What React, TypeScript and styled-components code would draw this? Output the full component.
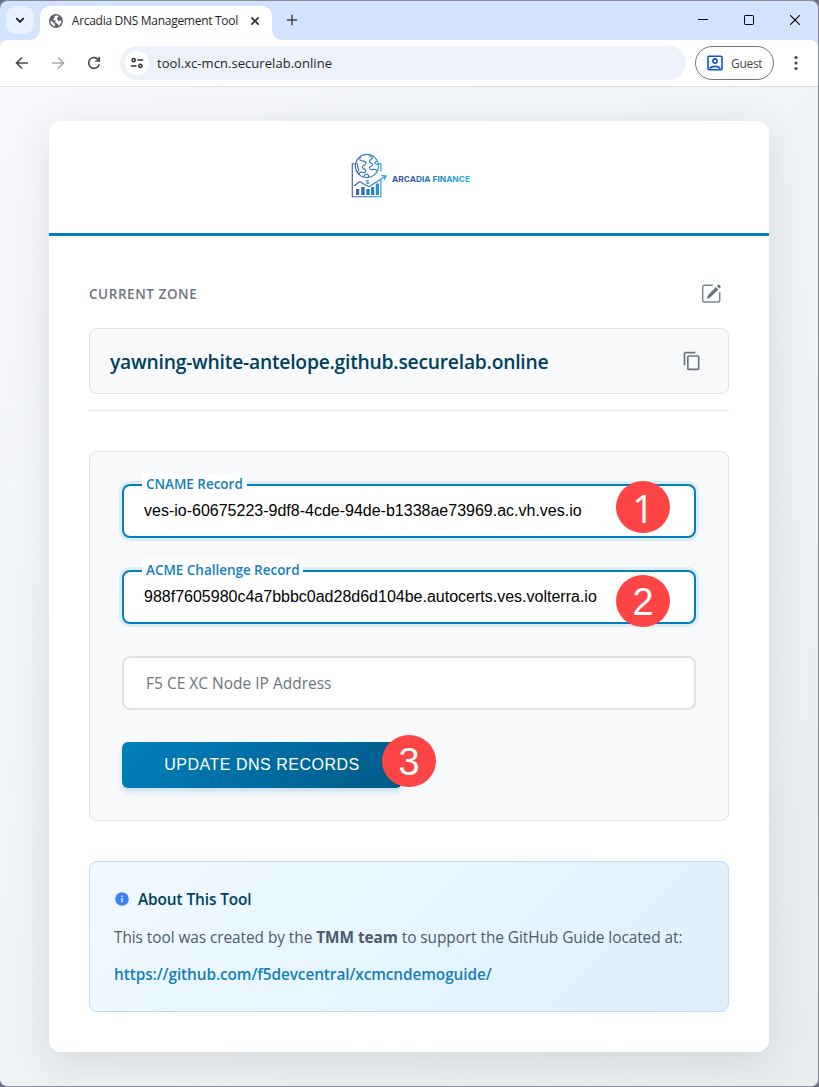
import React from 'react';
import styled, { createGlobalStyle, css } from 'styled-components';
import { MdContentCopy } from 'react-icons/md';

const GlobalStyle = createGlobalStyle`
  *, *::before, *::after { box-sizing: border-box; }
  html, body { margin: 0; padding: 0; background: #6f6e85; }
  body { font-family: 'Open Sans', 'Noto Sans', sans-serif; overflow: hidden; }
  button, input { font: inherit; margin: 0; }
`;

const BrowserWindow = styled.div`
  width: 819px;
  height: 1087px;
  display: flex;
  flex-direction: column;
  border: 1px solid #8b8d98;
  border-left: 0;
  border-radius: 8px;
  overflow: hidden;
  background: #d3e3fd;
`;

const TabStrip = styled.header`
  display: flex;
  height: 39px;
  flex: none;
  align-items: flex-end;
`;

const TabSearch = styled.button`
  width: 28px;
  height: 28px;
  margin: 0 6px 6px;
  border: 0;
  border-radius: 10px;
  padding: 0;
  background: #e9f0fe;
  display: grid;
  place-items: center;
`;

const Tab = styled.div`
  position: relative;
  display: flex;
  align-items: center;
  width: 232px;
  height: 34px;
  padding: 0 9px 5px;
  border-radius: 10px 10px 0 0;
  background: #fff;
  &::before, &::after {
    content: '';
    position: absolute;
    bottom: 0;
    width: 10px;
    height: 10px;
  }
  &::before { left: -10px; background: radial-gradient(circle at 0 0, transparent 9.5px, #fff 10px); }
  &::after { right: -10px; background: radial-gradient(circle at 100% 0, transparent 9.5px, #fff 10px); }
`;

const TabTitle = styled.span`
  width: 169px;
  margin-left: 9px;
  font-size: 12px;
  letter-spacing: -0.29px;
  color: #1f1f1f;
  white-space: nowrap;
`;

const IconButton = styled.button<{ $w: number; $h?: number }>`
  border: 0;
  padding: 0;
  background: transparent;
  width: ${p => p.$w}px;
  height: ${p => p.$h ?? p.$w}px;
  display: grid;
  place-items: center;
  flex: none;
`;

const CloseTab = styled(IconButton)`
  margin-left: 8px;
`;

const NewTab = styled(IconButton)`
  margin: 0 0 10px 10px;
`;

const WindowControls = styled.div`
  display: flex;
  margin-left: auto;
  height: 39px;
`;

const Toolbar = styled.div`
  display: flex;
  align-items: center;
  height: 47px;
  flex: none;
  background: #fff;
  border-bottom: 1px solid #dfe1e3;
  border-radius: 8px 8px 0 0;
  padding: 0 4px;
`;

const AddressBar = styled.div`
  display: flex;
  align-items: center;
  flex: none;
  width: 566px;
  height: 34px;
  margin-left: 8px;
  padding-left: 5px;
  border-radius: 17px;
  background: #ecf1fa;
`;

const SiteInfo = styled.span`
  width: 24px;
  height: 24px;
  border-radius: 50%;
  background: #fff;
  display: grid;
  place-items: center;
`;

const Address = styled.span`
  margin-left: 8px;
  font-size: 13px;
  letter-spacing: 0.05px;
  color: #1f1f1f;
`;

const Profile = styled.button`
  display: flex;
  align-items: center;
  flex: none;
  width: 79px;
  height: 34px;
  margin-left: 9px;
  padding: 0 0 0 11px;
  border: 1px solid #747775;
  border-radius: 17px;
  background: #fff;
  color: #474747;
  font-size: 12px;
  letter-spacing: -0.3px;
  gap: 8px;
`;

const MenuButton = styled(IconButton)`
  margin-left: 4px;
`;

const Page = styled.main`
  flex: 1;
  padding: 34px 49px 34px;
  background: linear-gradient(135deg, #f6f8fc 0%, #e9edef 100%);
`;

const Card = styled.section`
  width: 720px;
  height: 931px;
  border-radius: 12px;
  background: #fff;
  box-shadow: 0 10px 40px rgba(0, 0, 0, 0.1);
`;

const Brand = styled.header`
  height: 115px;
  display: flex;
  justify-content: center;
  padding: 30px 0 0 4px;
  border-bottom: 3px solid #0080bd;
`;

const Body = styled.div`
  padding: 40px;
`;

const ZoneHeader = styled.div`
  display: flex;
  align-items: center;
  justify-content: space-between;
  height: 35px;
  padding-right: 7px;
`;

const ZoneTitle = styled.h2`
  margin: 0;
  font-size: 13.5px;
  font-weight: 600;
  letter-spacing: 0.56px;
  color: #6c757d;
`;

const ZoneBox = styled.div`
  display: flex;
  align-items: center;
  justify-content: space-between;
  height: 66px;
  margin-top: 17px;
  padding: 0 26px 0 20px;
  border: 1px solid #dee2e6;
  border-radius: 8px;
  background: #f8f9fb;
`;

const ZoneName = styled.span`
  font-size: 19.3px;
  font-weight: 600;
  letter-spacing: -0.235px;
  color: #003f5e;
`;

const Divider = styled.hr`
  margin: 16px 0 40px;
  border: 0;
  height: 1px;
  background: #e5e8eb;
`;

const Form = styled.form`
  display: flex;
  flex-direction: column;
  align-items: flex-start;
  height: 370px;
  padding: 32px;
  border: 1px solid #dee2e6;
  border-radius: 8px;
  background: #f8f9fb;
`;

const Field = styled.div`
  position: relative;
  width: 574px;
  height: 54px;
  margin-bottom: 32px;
  &:nth-child(3) { margin-top: 0.5px; }
`;

const Input = styled.input<{ $active?: boolean }>`
  display: block;
  width: 100%;
  height: 100%;
  padding: 0 20px;
  border: 2px solid #dee2e6;
  border-radius: 8px;
  outline: 0;
  background: #fff;
  color: #000;
  font-family: 'Liberation Sans', Arial, sans-serif;
  font-size: 16px;
  &::placeholder {
    color: #6c757d;
    opacity: 1;
    font-family: 'Open Sans', sans-serif;
    font-size: 15.5px;
  }
  ${p => p.$active ? css`
    border-color: #0080bd;
    box-shadow: 0 0 0 3px rgba(0, 128, 189, 0.1);
  ` : css`padding: 2px 22px 0;`}
`;

const FieldLabel = styled.label<{ $w: number }>`
  position: absolute;
  top: -11px;
  left: 20px;
  width: ${p => p.$w}px;
  padding: 0 4px;
  background: #fff;
  color: #147fbb;
  font-size: 13.5px;
  font-weight: 600;
  line-height: 22px;
  letter-spacing: -0.03px;
  white-space: nowrap;
`;

const Marker = styled.span<{ $x: number; $y: number; $plainOne?: boolean }>`
  position: absolute;
  left: ${p => p.$x}px;
  top: ${p => p.$y}px;
  width: 54px;
  height: 52px;
  border-radius: 50%;
  background: #fe4444;
  color: #fff;
  font: 38px/54px ${p => p.$plainOne ? "'Open Sans'" : "'Liberation Sans', Arial"}, sans-serif;
  text-align: center;
`;

const SubmitRow = styled.div`
  position: relative;
`;

const Submit = styled.button`
  width: 280px;
  height: 46px;
  border: 0;
  border-radius: 6px;
  padding: 0;
  background: linear-gradient(135deg, #0080bd, #005a87);
  box-shadow: 0 4px 6px rgba(0, 128, 189, 0.2);
  color: #fff;
  font-family: 'Liberation Sans', Arial, sans-serif;
  font-size: 16px;
  letter-spacing: 0.5px;
`;

const Info = styled.section`
  height: 151px;
  margin-top: 40px;
  padding: 23px 24px;
  border: 1px solid #bedbfb;
  border-radius: 8px;
  background: linear-gradient(135deg, #f0f9ff, #e2f3fe 75%, #deeffe);
`;

const InfoTitle = styled.h3`
  display: flex;
  align-items: center;
  gap: 9px;
  height: 28px;
  margin: 0;
  color: #003f5e;
  font-size: 15.4px;
  font-weight: 600;
  letter-spacing: -0.1px;
`;

const InfoText = styled.p`
  margin: 12px 0 0;
  color: #4b5b6c;
  font-size: 15.4px;
  letter-spacing: -0.06px;
  line-height: 26px;
  white-space: nowrap;
`;

const InfoLink = styled.a`
  display: block;
  width: fit-content;
  margin-top: 11px;
  color: #147fbb;
  font-size: 15.4px;
  font-weight: 600;
  letter-spacing: -0.1px;
  line-height: 26px;
  text-decoration: none;
`;

const Logo = () => (
  <svg width="122" height="48" viewBox="350 150.500 122 48" fill="none" role="img" aria-label="Arcadia Finance">
    <defs>
      <linearGradient id="mark" x1="351" x2="387" y1="0" y2="0" gradientUnits="userSpaceOnUse">
        <stop stopColor="#4358a2" /><stop offset=".55" stopColor="#2883c0" /><stop offset="1" stopColor="#26aade" />
      </linearGradient>
      <linearGradient id="word" x1="392" x2="470" y1="0" y2="0" gradientUnits="userSpaceOnUse">
        <stop stopColor="#3c4b9e" /><stop offset=".5" stopColor="#2878bd" /><stop offset="1" stopColor="#27b4e8" />
      </linearGradient>
    </defs>
    <g stroke="url(#mark)" strokeWidth="1.150">
      <path d="M354.500 163.200H352.300V196.200H380.900V179M380.900 171V163.200H378.700" />
      <circle cx="366.900" cy="165.500" r="11.600" />
      <path d="M360.500 156.500c-1.400 1.700-.7 3.300 1.100 3.800 2.300.6 4.300.3 4.400 2.300.1 2.300-3.700 1.800-3.700 4 0 2.100 3.500 1.400 3.500 3.700 0 1.800-2 2-3.700 1.500-2-.6-2.900.6-3.500 2.200M355.600 163c1.800-.2 2.400 1.300 2 2.800-.3 1.700 1.200 2.300 1 3.900-.1 1.100-1 1.500-1.400 2.300" />
      <path d="M369.500 154.500c.7 1.900 2.900 1.300 2.800 3.100-.1 1.600-2.800 1.200-2.900 3.200-.1 2.100 3.200 1.300 3.200 3.200 0 1.700-3 1.400-3.100 3.400-.1 1.900 2.500 2 4 1.500 1.600-.5 2.500.3 3.400 1.200M377.600 161c-1.600-.7-2.900 0-2.700 1.300.2 1.200 1.900 1.200 3.400 1.800M364 176.500c.1-2 1.300-3.300 3.200-2.900 1.500.3 1.500 1.500 1.400 3.200" />
      <path d="M354.200 185.500L359.700 181L364 183.800M369 186.300L385.600 175.500M381.200 175.100L386.100 175.300L384.200 179.500M364 183.800L369 186.300" />
    </g>
    <text x="365.800" y="183.200" fill="#2883c0" fontFamily="Liberation Sans, sans-serif" fontSize="6" fontWeight="700">$</text>
    <path fill="url(#mark)" d="M356 188.500h3.200v6H356zM361.200 186.500h3.500v8h-3.500zM366.400 188.500h3.300v6h-3.300zM371 186.500h3.300v8H371zM375.800 183h3.200v11.500h-3.200z" />
    <text x="392" y="181.600" textLength="78" lengthAdjust="spacingAndGlyphs" fill="url(#word)" fontFamily="Inter, sans-serif" fontSize="7.800" fontWeight="700">ARCADIA FINANCE</text>
  </svg>
);

const Globe = () => (
  <svg width="14" height="14" viewBox="0 0 14 14">
    <circle cx="7" cy="7" r="7" fill="#5f6368" />
    <path fill="#fff" d="M7.500 1.500c1 .2 1.700.5 2.300.9L8.700 3.700c-.9-.2-.9.600-.6 1.200.3.600 1 .5 1 1.300 0 .7 1.100 1 1.700.6.600-.4 1.200 0 1.700-.2.200 2.300-1.400 4.800-3.400 5.500.2-.9.500-1.600-.2-2.100C8.100 9.300 6.500 9.400 6.400 8.300c-.1-.8.700-1.400.1-1.900-.7-.6-1.600.1-2.100-.7C3.800 4.500 5 4.700 5.500 4c.6-.8-.3-1.300.4-2zM1.500 6.500l3 2.100c.3 1 1.500.8 1.500 1.900v1.900C3.200 12 1.300 9.400 1.500 6.500z" />
  </svg>
);

const EditIcon = () => (
  <svg width="21" height="21" viewBox="0 0 21 21" fill="none">
    <path d="M11.800 2.300H3.200a1.500 1.500 0 0 0-1.500 1.500v13.700A1.500 1.500 0 0 0 3.200 19h14a1.500 1.500 0 0 0 1.500-1.500V9.300" stroke="#7c858d" strokeWidth="1.500" />
    <path fill="#69727a" d="M14.900 4.100l2.400 2.400-7.800 7.800-3.900 1.700 1.600-4.100zM15.900 3.100l1.300-1.300c.3-.3.700-.3 1 0l1.400 1.400c.3.300.3.700 0 1l-1.300 1.300z" />
  </svg>
);

const stroke = (d: string, color = '#474747', width = 1.6, size = 16) => (
  <svg width={size} height={size} viewBox="0 0 16 16" fill="none" stroke={color} strokeWidth={width}>
    <path d={d} />
  </svg>
);

const App = () => (
  <>
    <GlobalStyle />
    <BrowserWindow>
      <TabStrip>
        <TabSearch aria-label="Search tabs">{stroke('M4.300 6.200L8 9.900L11.700 6.200', '#1f1f1f', 1.9)}</TabSearch>
        <Tab>
          <Globe />
          <TabTitle>Arcadia DNS Management Tool</TabTitle>
          <CloseTab $w={16} aria-label="Close tab">{stroke('M4.300 4.300L11.700 11.700M11.700 4.300L4.300 11.700', '#333', 1.7)}</CloseTab>
        </Tab>
        <NewTab $w={20} aria-label="New tab">{stroke('M8 2.800V13.200M2.800 8H13.200', '#474747', 1.5)}</NewTab>
        <WindowControls>
          <IconButton $w={46} $h={38} aria-label="Minimize">
            <svg width="10" height="10"><path d="M0 4.500H10" stroke="#000" /></svg>
          </IconButton>
          <IconButton $w={46} $h={38} aria-label="Maximize">
            <svg width="10" height="10" fill="none"><rect x=".5" y=".5" width="9" height="9" rx=".7" stroke="#000" /></svg>
          </IconButton>
          <IconButton $w={46} $h={38} aria-label="Close">
            <svg width="10" height="10"><path d="M0 0L10 10M10 0L0 10" stroke="#000" strokeWidth="1.100" /></svg>
          </IconButton>
        </WindowControls>
      </TabStrip>
      <Toolbar>
        <IconButton $w={36} aria-label="Back">{stroke('M14 8H2.800M8 2.500L2.500 8L8 13.500')}</IconButton>
        <IconButton $w={36} aria-label="Forward">{stroke('M2 8H13.200M8 2.500L13.500 8L8 13.500', '#aaa')}</IconButton>
        <IconButton $w={36} aria-label="Reload">
          {stroke('M12.700 5.200A5.400 5.400 0 1 0 13.300 9.200M13.300 1.900V6H9.200', '#474747', 1.6)}
        </IconButton>
        <AddressBar>
          <SiteInfo>{stroke('M8.500 4.700H15M1 11.300H7.500M4.200 2.800A1.900 1.900 0 1 0 4.210 2.800M11.800 9.400A1.900 1.900 0 1 0 11.810 9.400', '#333', 1.7, 14)}</SiteInfo>
          <Address>tool.xc-mcn.securelab.online</Address>
        </AddressBar>
        <Profile>
          <svg width="16" height="16" viewBox="0 0 16 16" fill="none" stroke="#0b57d0" strokeWidth="1.600">
            <rect x="1" y="1.200" width="14" height="13.600" rx="1" />
            <circle cx="8" cy="6" r="2.100" />
            <path d="M2.500 13.500C5 10.700 11 10.700 13.500 13.500" />
          </svg>
          Guest
        </Profile>
        <MenuButton $w={36} aria-label="Menu">
          <svg width="4" height="16" fill="#474747"><circle cx="2" cy="2.500" r="1.600" /><circle cx="2" cy="8" r="1.600" /><circle cx="2" cy="13.500" r="1.600" /></svg>
        </MenuButton>
      </Toolbar>
      <Page>
        <Card>
          <Brand><Logo /></Brand>
          <Body>
            <ZoneHeader>
              <ZoneTitle>CURRENT ZONE</ZoneTitle>
              <EditIcon />
            </ZoneHeader>
            <ZoneBox>
              <ZoneName>yawning-white-antelope.github.securelab.online</ZoneName>
              <MdContentCopy size={20} color="#6c757d" />
            </ZoneBox>
            <Divider />
            <Form>
              <Field>
                <Input $active readOnly value="ves-io-60675223-9df8-4cde-94de-b1338ae73969.ac.vh.ves.io" />
                <FieldLabel $w={105}>CNAME Record</FieldLabel>
                <Marker $x={494} $y={-3} $plainOne>1</Marker>
              </Field>
              <Field>
                <Input $active readOnly value="988f7605980c4a7bbbc0ad28d6d104be.autocerts.ves.volterra.io" />
                <FieldLabel $w={161}>ACME Challenge Record</FieldLabel>
                <Marker $x={494} $y={5}>2</Marker>
              </Field>
              <Field>
                <Input readOnly placeholder="F5 CE XC Node IP Address" />
              </Field>
              <SubmitRow>
                <Submit type="button">UPDATE DNS RECORDS</Submit>
                <Marker $x={260} $y={-7}>3</Marker>
              </SubmitRow>
            </Form>
            <Info>
              <InfoTitle>
                <svg width="15" height="14" viewBox="0 0 15 14">
                  <circle cx="8" cy="7" r="6.800" fill="#3b82f6" />
                  <path d="M8 6V10.300M8 3.400V4.900" stroke="#dceaff" strokeWidth="1.600" />
                </svg>
                About This Tool
              </InfoTitle>
              <InfoText>This tool was created by the <strong>TMM team</strong> to support the GitHub Guide located at:</InfoText>
              <InfoLink>https://github.com/f5devcentral/xcmcndemoguide/</InfoLink>
            </Info>
          </Body>
        </Card>
      </Page>
    </BrowserWindow>
  </>
);

export default App;
